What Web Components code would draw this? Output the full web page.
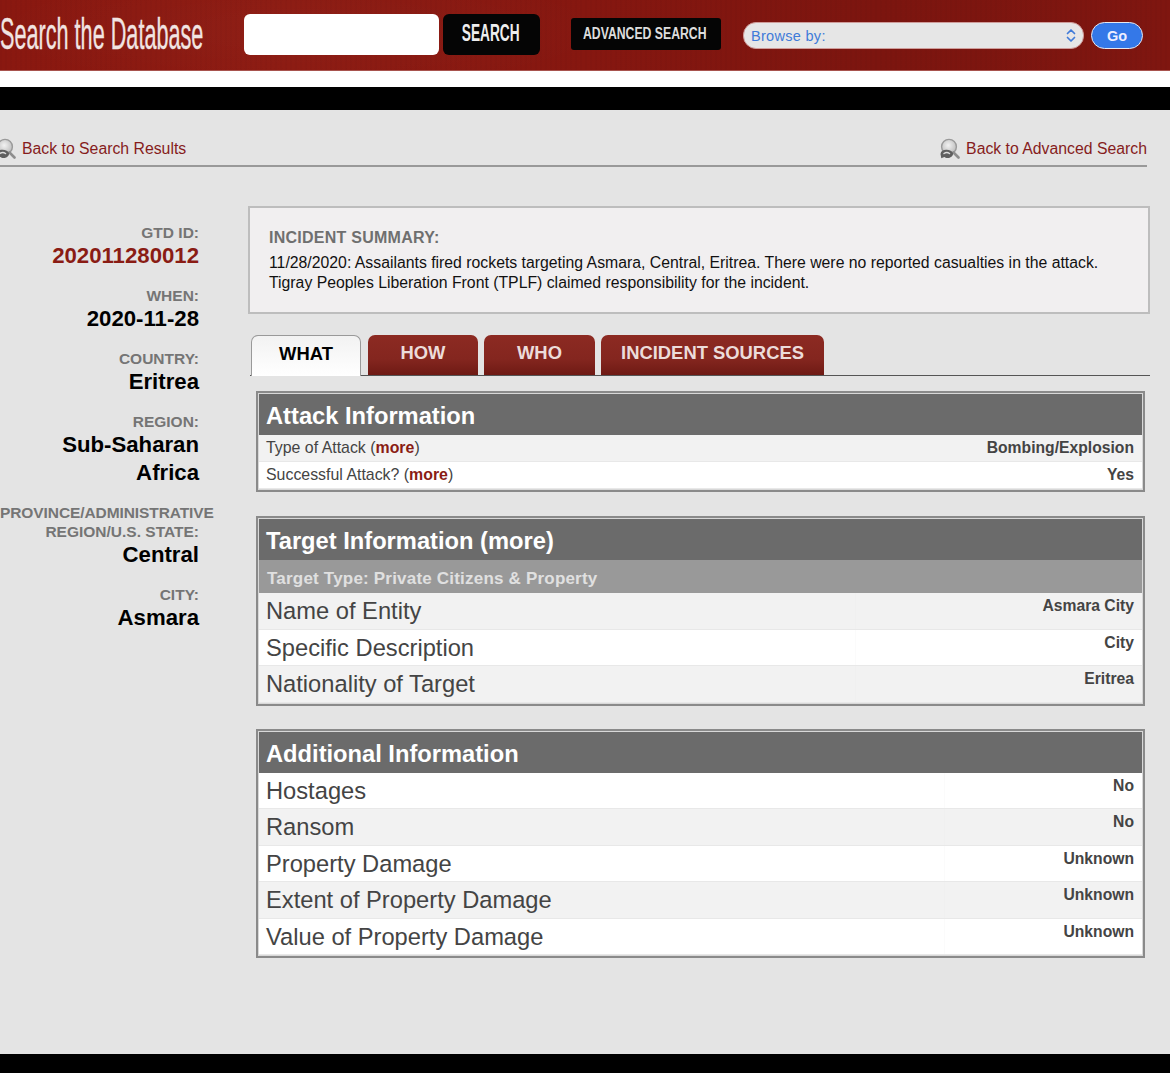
<!DOCTYPE html>
<html><head><meta charset="utf-8">
<style>
html,body{margin:0;padding:0;background:#e4e4e4;font-family:"Liberation Sans",Arial,sans-serif;overflow:hidden}
body{width:1170px;height:1073px}
</style></head><body>
<gtd-page></gtd-page>
<template id="t-page"><style>
:host{display:flex;flex-direction:column;height:1073px;background:#e4e4e4;overflow:hidden}
.white{height:16px;background:#fff;flex:none}
.black{height:23px;background:#000;flex:none}
.body{flex:1;min-height:0}
.foot{height:19px;background:#000;flex:none}
.cols{display:flex;margin-top:39px}
.main{margin-left:49px;width:902px;display:flex;flex-direction:column}
</style>
<gtd-header></gtd-header><div class="white"></div><div class="black"></div>
<div class="body">
<gtd-backbar></gtd-backbar>
<div class="cols"><gtd-side></gtd-side>
<div class="main">
<gtd-summary></gtd-summary>
<gtd-tabs></gtd-tabs>
<gtd-table title="Attack Information" small style="margin-top:15px">
<gtd-row small shade>Type of Attack (<b>more</b>)<span slot="v">Bombing/Explosion</span></gtd-row>
<gtd-row small>Successful Attack? (<b>more</b>)<span slot="v">Yes</span></gtd-row>
</gtd-table>
<gtd-table title="Target Information (more)" sub="Target Type: Private Citizens &amp; Property" style="margin-top:24px">
<gtd-row shade split="596">Name of Entity<span slot="v">Asmara City</span></gtd-row>
<gtd-row split="596">Specific Description<span slot="v">City</span></gtd-row>
<gtd-row shade split="596">Nationality of Target<span slot="v">Eritrea</span></gtd-row>
</gtd-table>
<gtd-table title="Additional Information" style="margin-top:23px">
<gtd-row split="685">Hostages<span slot="v">No</span></gtd-row>
<gtd-row shade split="685">Ransom<span slot="v">No</span></gtd-row>
<gtd-row split="685">Property Damage<span slot="v">Unknown</span></gtd-row>
<gtd-row shade split="685">Extent of Property Damage<span slot="v">Unknown</span></gtd-row>
<gtd-row split="685">Value of Property Damage<span slot="v">Unknown</span></gtd-row>
</gtd-table>
</div></div></div>
<div class="foot"></div>
</template>

<template id="t-header"><style>
:host{display:flex;align-items:flex-start;height:71px;flex:none;box-sizing:border-box;
background:repeating-linear-gradient(90deg,rgba(0,0,0,.025) 0 2px,transparent 2px 5px),radial-gradient(ellipse 320px 60px at 300px 30px,rgba(255,255,255,.025),transparent),linear-gradient(90deg,#8a1810 0%,#8c1a11 25%,#861710 50%,#7c150f 75%,#7f1610 100%);border-bottom:1px solid #a8544e}
.t{margin:0;width:204px;height:60px;flex:none;overflow:visible}
h1{margin:9px 0 0 0;height:50px;font:400 44px/50px "Liberation Sans Narrow","Liberation Sans",sans-serif;color:#f1e4e2;white-space:nowrap;transform-origin:0 50%;transform:scaleX(.492);width:max-content;-webkit-text-stroke:.3px #f1e4e2}
.in{margin:14px 0 0 40px;width:195px;height:41px;background:#fff;border-radius:6px}
.s{margin:14px 0 0 4px;width:97px;height:41px;background:#050505;border-radius:6px;display:flex;align-items:center;justify-content:center;color:#eee;overflow:hidden}
.s span{display:inline-block;font:700 24px/1 "Liberation Sans Narrow","Liberation Sans",sans-serif;transform:scaleX(.57);white-space:nowrap;padding-bottom:3px;margin-left:-1px}
.a{margin:18px 0 0 31px;width:150px;height:32px;background:#050505;border-radius:3px;display:flex;align-items:center;justify-content:center;color:#ddd;overflow:hidden}
.a span{display:inline-block;font:700 16px/1 "Liberation Sans Narrow","Liberation Sans",sans-serif;transform:scaleX(.765);white-space:nowrap;margin-left:-3px}
.sel{margin:22px 0 0 22px;width:341px;height:27px;box-sizing:border-box;border:1px solid #cf9c9a;border-radius:13px;background:#e6e6e6;display:flex;align-items:center;justify-content:space-between;padding:0 6px 0 7px;color:#3f7bd9;font:14.5px "Liberation Sans",sans-serif;letter-spacing:.3px}
.go{margin:22px 0 0 7px;width:52px;height:27px;box-sizing:border-box;border:1px solid #e7e7ef;border-radius:14px;background:#3478e8;color:#eef;font:700 14.5px/27px "Liberation Sans",sans-serif;text-align:center}
svg{display:block}
</style>
<div class="t"><h1>Search the Database</h1></div><div class="in"></div><div class="s"><span>SEARCH</span></div><div class="a"><span>ADVANCED SEARCH</span></div>
<div class="sel"><span>Browse by:</span><svg width="12" height="15" viewBox="0 0 12 15" fill="none" stroke="#3f7bd9" stroke-width="1.7" stroke-linecap="round" stroke-linejoin="round"><path d="M2.5 5.5 6 2l3.5 3.5M2.5 9.5 6 13l3.5-3.5"/></svg></div>
<div class="go">Go</div>
</template>

<template id="t-icon"><style>
:host{display:block;width:21px;height:22px;flex:none}
svg{display:block}
</style>
<svg width="21" height="22" viewBox="0 0 21 22">
<defs><radialGradient id="g" cx=".45" cy=".4" r=".6"><stop offset="0" stop-color="#f2f2f2"/><stop offset="1" stop-color="#bdbdbd"/></radialGradient></defs>
<circle cx="10" cy="8.8" r="7.4" fill="url(#g)" stroke="#9a9a9a" stroke-width="1.4"/>
<path d="M14.5 14.5l5 5" stroke="#8d8d8d" stroke-width="2.6" stroke-linecap="round"/>
<path d="M1.5 16c.3-3 3-4.3 6-4.2 3 .2 6 1.3 6.5 3.4.4 2.2-2 4.6-5 4.8-2 .1-2.8-.5-3.7-1l-3 1.2z" fill="#5f5f5f"/>
<path d="M5 15.5c1.5-1 4-1 5.5 0" stroke="#dcdcdc" stroke-width="1.5" fill="none" stroke-linecap="round"/>
</svg>
</template>

<template id="t-backbar"><style>
:host{display:flex;justify-content:space-between;align-items:flex-start;width:1147px;box-sizing:border-box;margin-top:21px;height:36px;border-bottom:2px solid #999}
a{display:flex;align-items:flex-start;color:#861c1c;font:15.8px/20px "Liberation Sans",sans-serif;gap:6px}
a.l{margin-left:-5px}
span{padding-top:8px}
gtd-icon{margin-top:7px}
</style>
<a class="l"><gtd-icon></gtd-icon><span>Back to Search Results</span></a>
<a><gtd-icon></gtd-icon><span>Back to Advanced Search</span></a>
</template>

<template id="t-side"><style>
:host{display:block;width:199px;flex:none;text-align:right;padding-top:17px}
.l{color:#757575;font:700 15.5px/19px "Liberation Sans",sans-serif;margin-top:16px}
.v{color:#000;font:700 22.2px/28px "Liberation Sans",sans-serif}
.first{margin-top:0}
.id{color:#8a1c14;letter-spacing:0}
</style>
<div class="l first">GTD ID:</div><div class="v id">202011280012</div>
<div class="l">WHEN:</div><div class="v">2020-11-28</div>
<div class="l">COUNTRY:</div><div class="v">Eritrea</div>
<div class="l">REGION:</div><div class="v">Sub-Saharan Africa</div>
<div class="l"><span style="letter-spacing:-.09px">PROVINCE/ADMINISTRATIVE</span> REGION/U.S. STATE:</div><div class="v">Central</div>
<div class="l">CITY:</div><div class="v">Asmara</div>
</template>

<template id="t-summary"><style>
:host{display:block;box-sizing:border-box;height:108px;border:2px solid #bdbdbd;background:#f1eff0;padding:20px 19px 0}
h3{margin:0;color:#6f6f6f;font:700 16px/20px "Liberation Sans",sans-serif;letter-spacing:.25px}
p{margin:5px 0 0;color:#111;font:15.8px/20px "Liberation Sans",sans-serif;white-space:nowrap}
</style>
<h3>INCIDENT SUMMARY:</h3>
<p>11/28/2020: Assailants fired rockets targeting Asmara, Central, Eritrea. There were no reported casualties in the attack.<br>Tigray Peoples Liberation Front (TPLF) claimed responsibility for the incident.</p>
</template>

<template id="t-tabs"><style>
:host{display:flex;margin:21px 0 0 2px;height:41px;box-sizing:border-box;border-bottom:1px solid #555;padding-left:1px;gap:6px;flex:none}
div{box-sizing:border-box;height:40px;border-radius:7px 7px 0 0;display:flex;align-items:center;justify-content:center;font:700 18.4px/1 "Liberation Sans",sans-serif;padding-bottom:3px}
.on{width:110px;height:41px;background:linear-gradient(#f2f2f2,#fff);color:#000;border:1px solid #999;border-bottom:0;margin-right:1px;padding-bottom:4px}
.off{background:linear-gradient(#8c2a22,#84261f 60%,#6e1a14);color:#ecdcda}
</style>
<div class="on">WHAT</div><div class="off" style="width:110px">HOW</div><div class="off" style="width:111px">WHO</div><div class="off" style="width:223px">INCIDENT SOURCES</div>
</template>

<template id="t-table"><style>
:host{display:block;width:889px;margin-left:8px;box-sizing:border-box;border:2px solid #8a8a8a;padding:1px;flex:none;background:#d8d8d8}
h2{margin:0;height:41px;background:#6b6b6b;color:#fff;font:700 23.7px/44px "Liberation Sans",sans-serif;padding-left:7px}
.sub{height:33px;background:#999;color:#e0e0e0;font:700 17px/37px "Liberation Sans",sans-serif;padding-left:8px;letter-spacing:.2px}
.sub:empty{display:none}
</style>
<h2></h2><div class="sub"></div><slot></slot>
</template>

<template id="t-row"><style>
:host{display:flex;justify-content:space-between;box-sizing:border-box;height:36.5px;background:#fff;color:#444;padding:0 8px 0 7px;border-bottom:1px solid #e8e8e8}
:host([shade]){background:#f2f2f2}
:host([small]){height:27px}
.k{font:23.7px/36px "Liberation Sans",sans-serif}
:host([small]) .k{font:15.9px/26px "Liberation Sans",sans-serif}
.v{font:700 15.7px/26px "Liberation Sans",sans-serif}
:host([small]) .v{line-height:26px}
::slotted(b){color:#8a1c14}
</style>
<div class="k"><slot></slot></div><div class="v"><slot name="v"></slot></div>
</template>

<script>
function reg(tag,tid,init){customElements.define(tag,class extends HTMLElement{
connectedCallback(){if(this.shadowRoot)return;const r=this.attachShadow({mode:'open'});r.appendChild(document.getElementById(tid).content.cloneNode(true));if(init)init(this,r);}
});}
reg('gtd-icon','t-icon');
reg('gtd-header','t-header');reg('gtd-backbar','t-backbar');reg('gtd-side','t-side');reg('gtd-summary','t-summary');reg('gtd-tabs','t-tabs');
reg('gtd-table','t-table',(h,r)=>{r.querySelector('h2').textContent=h.getAttribute('title');h.removeAttribute('title');r.querySelector('.sub').textContent=h.getAttribute('sub')||'';});
reg('gtd-row','t-row',(h)=>{const s=+h.getAttribute('split');if(s){const c=h.hasAttribute('shade')?'#f0f0f0':'#fbfbfb';h.style.backgroundImage='linear-gradient(90deg,transparent '+s+'px,'+c+' '+s+'px,'+c+' '+(s+1)+'px,transparent '+(s+1)+'px)';}});
reg('gtd-page','t-page');
</script>
</body></html>
